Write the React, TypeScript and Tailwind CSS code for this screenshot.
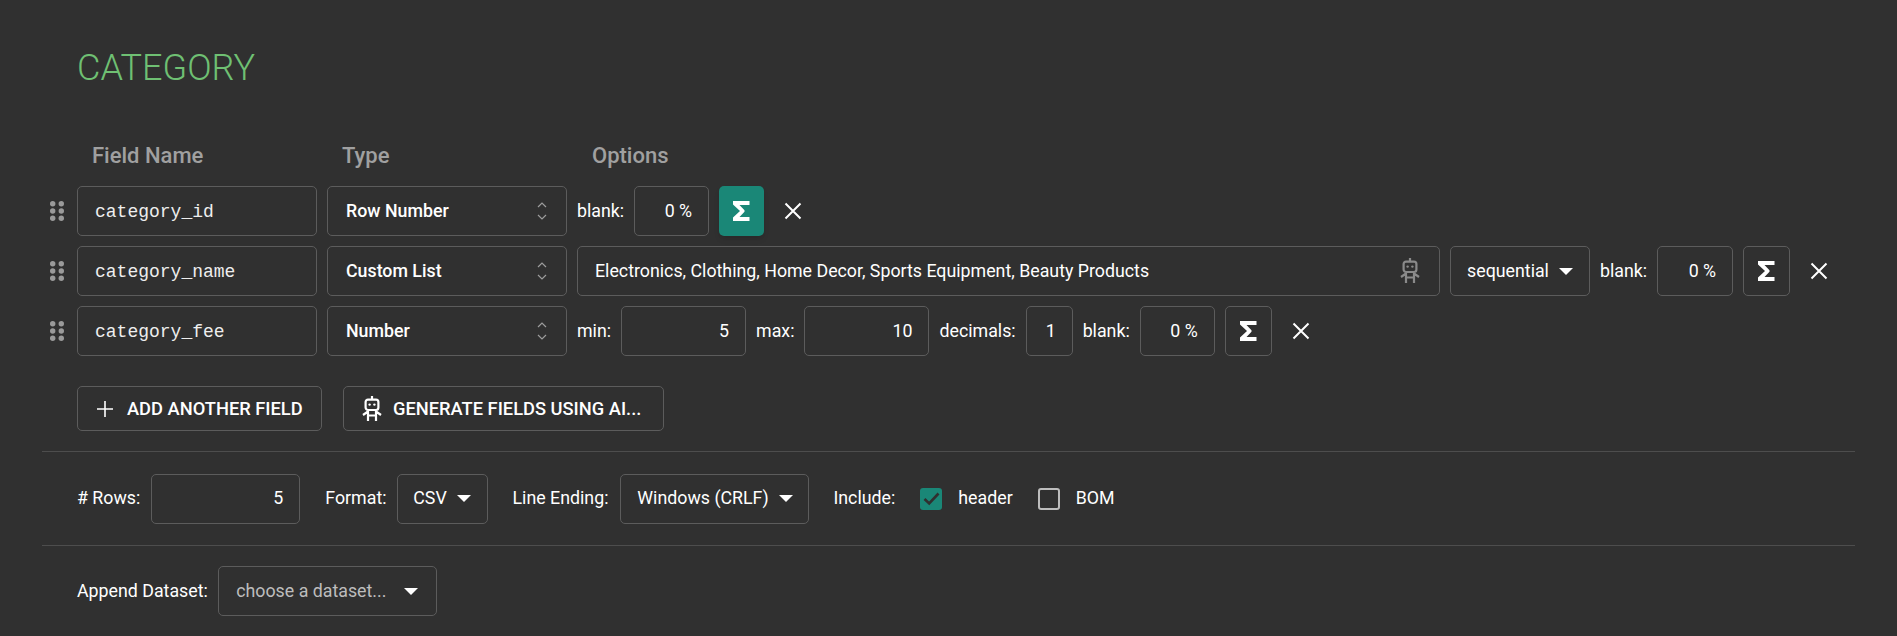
import React from "react";

const Sigma = ({ className = "" }: { className?: string }) => (
  <svg width="17" height="20" viewBox="0 0 17 20" className={className} fill="currentColor">
    <path d="M0 0H16.5V4H6.5L11.5 9.2V10.8L6.5 16H16.5V20H0V16.6L7 10L0 3.4Z" />
  </svg>
);

const Close = () => (
  <svg width="18" height="18" viewBox="0 0 18 18" stroke="currentColor" strokeWidth="2" fill="none">
    <path d="M1.5 1.5L16.5 16.5M16.5 1.5L1.5 16.5" />
  </svg>
);

const Robot = ({ className = "" }: { className?: string }) => (
  <svg width="20" height="26" viewBox="0 0 20 26" className={className} fill="none" stroke="currentColor" strokeWidth="2.2">
    <path d="M10 0V3" />
    <rect x="3.6" y="3.6" width="12.8" height="10.4" rx="2.4" />
    <circle cx="7.6" cy="8.6" r="1.2" fill="currentColor" stroke="none" />
    <circle cx="12.4" cy="8.6" r="1.2" fill="currentColor" stroke="none" />
    <path d="M6 15V25M14 15V25M6 19.5H14M6 15.5L1 19M14 15.5L19 19" />
  </svg>
);

const Drag = () => (
  <svg width="14" height="20" viewBox="0 0 14 20" fill="#9a9a9a">
    {[2.7, 10, 17.3].map((y) =>
      [2.7, 11.3].map((x) => <circle key={`${x}-${y}`} cx={x} cy={y} r="2.7" />)
    )}
  </svg>
);

const Stepper = () => (
  <svg width="10" height="18" viewBox="0 0 10 18" fill="none" stroke="#9c9c9c" strokeWidth="1.2" className="ml-auto">
    <path d="M1 5L5 1L9 5M1 13L5 17L9 13" />
  </svg>
);

const Caret = () => (
  <span className="ml-[10px] h-0 w-0 border-x-[7px] border-t-[7px] border-x-transparent border-t-white" />
);

const NameField = ({ value }: { value: string }) => (
  <div className="flex h-[50px] w-[240px] shrink-0 items-center rounded-[5px] border border-[#5c5c5c] pl-[17px] pt-[2px] text-[18px] text-[#eeeeee] [font-family:'Liberation_Mono',monospace]">
    {value}
  </div>
);

const TypeField = ({ value }: { value: string }) => (
  <div className="flex h-[50px] w-[240px] shrink-0 items-center rounded-[5px] border border-[#5c5c5c] pl-[18px] pr-[19px] font-medium">
    {value}
    <Stepper />
  </div>
);

const Num = ({ value, w }: { value: string; w: string }) => (
  <div className={`flex h-[50px] shrink-0 items-center justify-end rounded-[5px] border border-[#5c5c5c] pr-[16px] ${w}`}>
    {value}
  </div>
);

const SigmaBtn = ({ active }: { active?: boolean }) =>
  active ? (
    <div className="flex h-[50px] w-[45px] shrink-0 items-center justify-center rounded-[5px] bg-[#1a8777] shadow-md">
      <Sigma />
    </div>
  ) : (
    <div className="flex h-[50px] w-[47px] shrink-0 items-center justify-center rounded-[5px] border border-[#5c5c5c]">
      <Sigma />
    </div>
  );

const Row = ({ name, type, children }: { name: string; type: string; children: React.ReactNode }) => (
  <div className="flex h-[50px] items-center">
    <div className="flex w-[35px] shrink-0 justify-end pr-[13px]">
      <Drag />
    </div>
    <NameField value={name} />
    <div className="ml-[10px] flex items-center gap-[10px] whitespace-nowrap">
      <TypeField value={type} />
      {children}
    </div>
  </div>
);

const Remove = ({ ml }: { ml: string }) => (
  <div className={`flex items-center ${ml}`}>
    <Close />
  </div>
);

const SelectBox = ({ children, className }: { children: React.ReactNode; className: string }) => (
  <div className={`flex h-[50px] shrink-0 items-center rounded-[5px] border border-[#5c5c5c] ${className}`}>
    {children}
  </div>
);

const Check = ({ checked }: { checked?: boolean }) =>
  checked ? (
    <div className="flex h-[22px] w-[22px] items-center justify-center rounded-[3px] bg-[#1a8777]">
      <svg width="17" height="14" viewBox="0 0 17 14" fill="none" stroke="#303030" strokeWidth="2.6">
        <path d="M1.5 7L6.2 11.5L15.5 1.5" />
      </svg>
    </div>
  ) : (
    <div className="h-[22px] w-[22px] rounded-[3px] border-[2.5px] border-[#bdbdbd]" />
  );

export default function App() {
  return (
    <div className="h-[636px] w-[1897px] overflow-hidden bg-[#303030] px-[42px] text-[17.8px] text-white [font-family:Roboto,sans-serif]">
      <h1 className="pl-[35px] pt-[44px] text-[36px] leading-[48px] font-light text-[#6fc073]">CATEGORY</h1>

      <div className="mt-[48px] flex h-[30px] items-center pl-[50px] text-[22px] font-medium text-[#a0a0a0]">
        <span className="w-[250px]">Field Name</span>
        <span className="w-[250px]">Type</span>
        <span>Options</span>
      </div>

      <div className="mt-[16px] flex flex-col gap-[10px]">
        <Row name="category_id" type="Row Number">
          <span>blank:</span>
          <Num value="0 %" w="w-[75px]" />
          <SigmaBtn active />
          <Remove ml="ml-[10px]" />
        </Row>
        <Row name="category_name" type="Custom List">
          <div className="flex h-[50px] w-[863px] shrink-0 items-center justify-between rounded-[5px] border border-[#5c5c5c] pl-[17px] pr-[19px]">
            <span>Electronics, Clothing, Home Decor, Sports Equipment, Beauty Products</span>
            <Robot className="text-[#8a8a8a]" />
          </div>
          <SelectBox className="w-[140px] justify-center">
            sequential
            <Caret />
          </SelectBox>
          <span>blank:</span>
          <Num value="0 %" w="w-[76px]" />
          <SigmaBtn />
          <Remove ml="ml-[10px]" />
        </Row>
        <Row name="category_fee" type="Number">
          <span>min:</span>
          <Num value="5" w="w-[125px]" />
          <span>max:</span>
          <Num value="10" w="w-[125px]" />
          <span>decimals:</span>
          <Num value="1" w="w-[47px]" />
          <span>blank:</span>
          <Num value="0 %" w="w-[75px]" />
          <SigmaBtn />
          <Remove ml="ml-[10px]" />
        </Row>
      </div>

      <div className="mt-[30px] flex gap-[21px] pl-[35px] text-[18.3px] font-medium">
        <div className="flex h-[45px] w-[245px] items-center rounded-[5px] border border-[#5c5c5c] pl-[19px]">
          <svg width="16" height="16" viewBox="0 0 16 16" stroke="white" strokeWidth="1.6" className="mr-[14px]">
            <path d="M8 0V16M0 8H16" />
          </svg>
          ADD ANOTHER FIELD
        </div>
        <div className="flex h-[45px] w-[321px] items-center rounded-[5px] border border-[#5c5c5c] pl-[18px]">
          <Robot className="mr-[11px] text-white" />
          GENERATE FIELDS USING AI...
        </div>
      </div>

      <div className="mt-[20px] flex h-[95px] items-center border-y border-[#4d4d4d] pl-[35px] whitespace-nowrap">
        <span>
          # Rows:
        </span>
        <Num value="5" w="ml-[11px] w-[149px]" />
        <span className="ml-[25px]">Format:</span>
        <SelectBox className="ml-[10px] w-[91px] justify-center">
          CSV
          <Caret />
        </SelectBox>
        <span className="ml-[25px]">Line Ending:</span>
        <SelectBox className="ml-[12px] w-[189px] justify-center">
          Windows (CRLF)
          <Caret />
        </SelectBox>
        <span className="ml-[24px]">Include:</span>
        <div className="ml-[25px] flex items-center gap-[16px]">
          <Check checked />
          <span>header</span>
        </div>
        <div className="ml-[25px] flex items-center gap-[16px]">
          <Check />
          <span>BOM</span>
        </div>
      </div>

      <div className="mt-[20px] flex items-center pl-[35px]">
        <span>Append Dataset:</span>
        <SelectBox className="ml-[10px] w-[219px] justify-center text-[#bdbdbd]">
          choose a dataset...
          <span className="ml-[18px] h-0 w-0 border-x-[7px] border-t-[7px] border-x-transparent border-t-white" />
        </SelectBox>
      </div>
    </div>
  );
}
